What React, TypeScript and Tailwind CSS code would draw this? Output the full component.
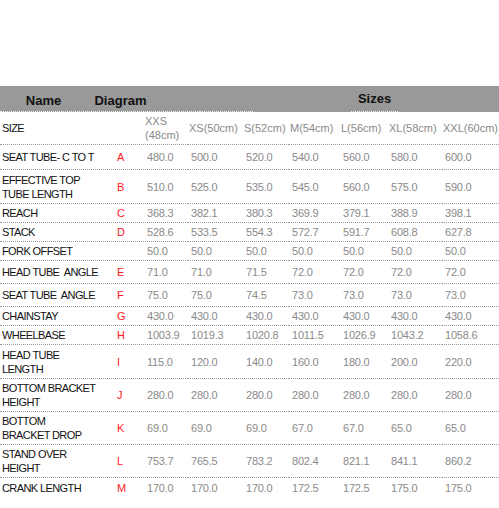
import React from "react";

interface GeoRow {
  name: string[];
  letter: string;
  vals: string[];
  h: string;
  last?: boolean;
}

const sizes = [["XXS", "(48cm)"], ["XS(50cm)"], ["S(52cm)"], ["M(54cm)"], ["L(56cm)"], ["XL(58cm)"], ["XXL(60cm)"]];
const sizeW = ["w-[43px]", "w-[54px]", "w-[45px]", "w-[50px]", "w-[47px]", "w-[53px]", "w-[58px]"];

const rows: GeoRow[] = [
  { name: ["SEAT TUBE- C TO T"], letter: "A", vals: ["480.0", "500.0", "520.0", "540.0", "560.0", "580.0", "600.0"], h: "h-[25px]" },
  { name: ["EFFECTIVE TOP", "TUBE LENGTH"], letter: "B", vals: ["510.0", "525.0", "535.0", "545.0", "560.0", "575.0", "590.0"], h: "h-[34px]" },
  { name: ["REACH"], letter: "C", vals: ["368.3", "382.1", "380.3", "369.9", "379.1", "388.9", "398.1"], h: "h-[19px]" },
  { name: ["STACK"], letter: "D", vals: ["528.6", "533.5", "554.3", "572.7", "591.7", "608.8", "627.8"], h: "h-[19px]" },
  { name: ["FORK OFFSET"], letter: "", vals: ["50.0", "50.0", "50.0", "50.0", "50.0", "50.0", "50.0"], h: "h-[19px]" },
  { name: ["HEAD TUBE  ANGLE"], letter: "E", vals: ["71.0", "71.0", "71.5", "72.0", "72.0", "72.0", "72.0"], h: "h-[23px]" },
  { name: ["SEAT TUBE  ANGLE"], letter: "F", vals: ["75.0", "75.0", "74.5", "73.0", "73.0", "73.0", "73.0"], h: "h-[23px]" },
  { name: ["CHAINSTAY"], letter: "G", vals: ["430.0", "430.0", "430.0", "430.0", "430.0", "430.0", "430.0"], h: "h-[19px]" },
  { name: ["WHEELBASE"], letter: "H", vals: ["1003.9", "1019.3", "1020.8", "1011.5", "1026.9", "1043.2", "1058.6"], h: "h-[19px]" },
  { name: ["HEAD TUBE", "LENGTH"], letter: "I", vals: ["115.0", "120.0", "140.0", "160.0", "180.0", "200.0", "220.0"], h: "h-[34px]" },
  { name: ["BOTTOM BRACKET", "HEIGHT"], letter: "J", vals: ["280.0", "280.0", "280.0", "280.0", "280.0", "280.0", "280.0"], h: "h-[33px]" },
  { name: ["BOTTOM", "BRACKET DROP"], letter: "K", vals: ["69.0", "69.0", "69.0", "67.0", "67.0", "65.0", "65.0"], h: "h-[33px]" },
  { name: ["STAND OVER", "HEIGHT"], letter: "L", vals: ["753.7", "765.5", "783.2", "802.4", "821.1", "841.1", "860.2"], h: "h-[33px]" },
  { name: ["CRANK LENGTH"], letter: "M", vals: ["170.0", "170.0", "170.0", "172.5", "172.5", "175.0", "175.0"], h: "h-[19px]", last: true },
];

export default function App() {
  return (
    <div className="w-[499px] h-[508px] bg-white pt-[86px] text-[11px] leading-[14px] font-['Liberation_Sans',Arial,sans-serif]">
      {/* Header bar */}
      <div className="flex h-[26px] bg-[#999999] text-[13px] font-bold text-[#111]">
        <div className="flex w-[198px] border-b border-dotted border-[#eeeeee]">
          <div className="w-[87px] flex items-center justify-center pt-[5px]">Name</div>
          <div className="w-[67px] flex items-center justify-center pt-[5px]">Diagram</div>
        </div>
        <div className="w-[54px] ml-px border-b border-dotted border-[#eeeeee]" />
        <div className="w-[98px]" />
        <div className="w-[47px] flex items-center justify-center border-b border-dotted border-[#eeeeee]">Sizes</div>
        <div className="flex-1" />
      </div>

      {/* Size labels row */}
      <div className="flex gap-x-px h-[33px]">
        <div className="w-[114px] flex items-center pl-[2px] border-b border-dotted border-[#999] text-[#111] tracking-[-0.6px]">SIZE</div>
        <div className="w-[27px] border-b border-dotted border-[#999]" />
        {sizes.map((s, i) => (
          <div key={i} className={`${sizeW[i]} flex flex-col justify-center pl-[2px] border-b border-dotted border-[#999] text-[#8a8a8a] whitespace-nowrap`}>
            {s.map((line, j) => (
              <span key={j}>{line}</span>
            ))}
          </div>
        ))}
      </div>

      {/* Geometry rows */}
      {rows.map((row, r) => {
        const border = row.last ? "" : "border-b border-dotted border-[#999]";
        return (
          <div key={r} className={`flex gap-x-px ${row.h}`}>
            <div className={`w-[114px] flex flex-col justify-center pl-[2px] text-[#111] whitespace-pre tracking-[-0.6px] ${border}`}>
              {row.name.map((line, j) => (
                <span key={j}>{line}</span>
              ))}
            </div>
            <div className={`w-[27px] flex items-center pl-[2px] text-[#ff1a1a] ${border}`}>{row.letter}</div>
            {row.vals.map((v, i) => (
              <div key={i} className={`${sizeW[i]} flex items-center pl-[4px] text-[#8a8a8a] tracking-[-0.2px] ${border}`}>
                {v}
              </div>
            ))}
          </div>
        );
      })}
    </div>
  );
}
